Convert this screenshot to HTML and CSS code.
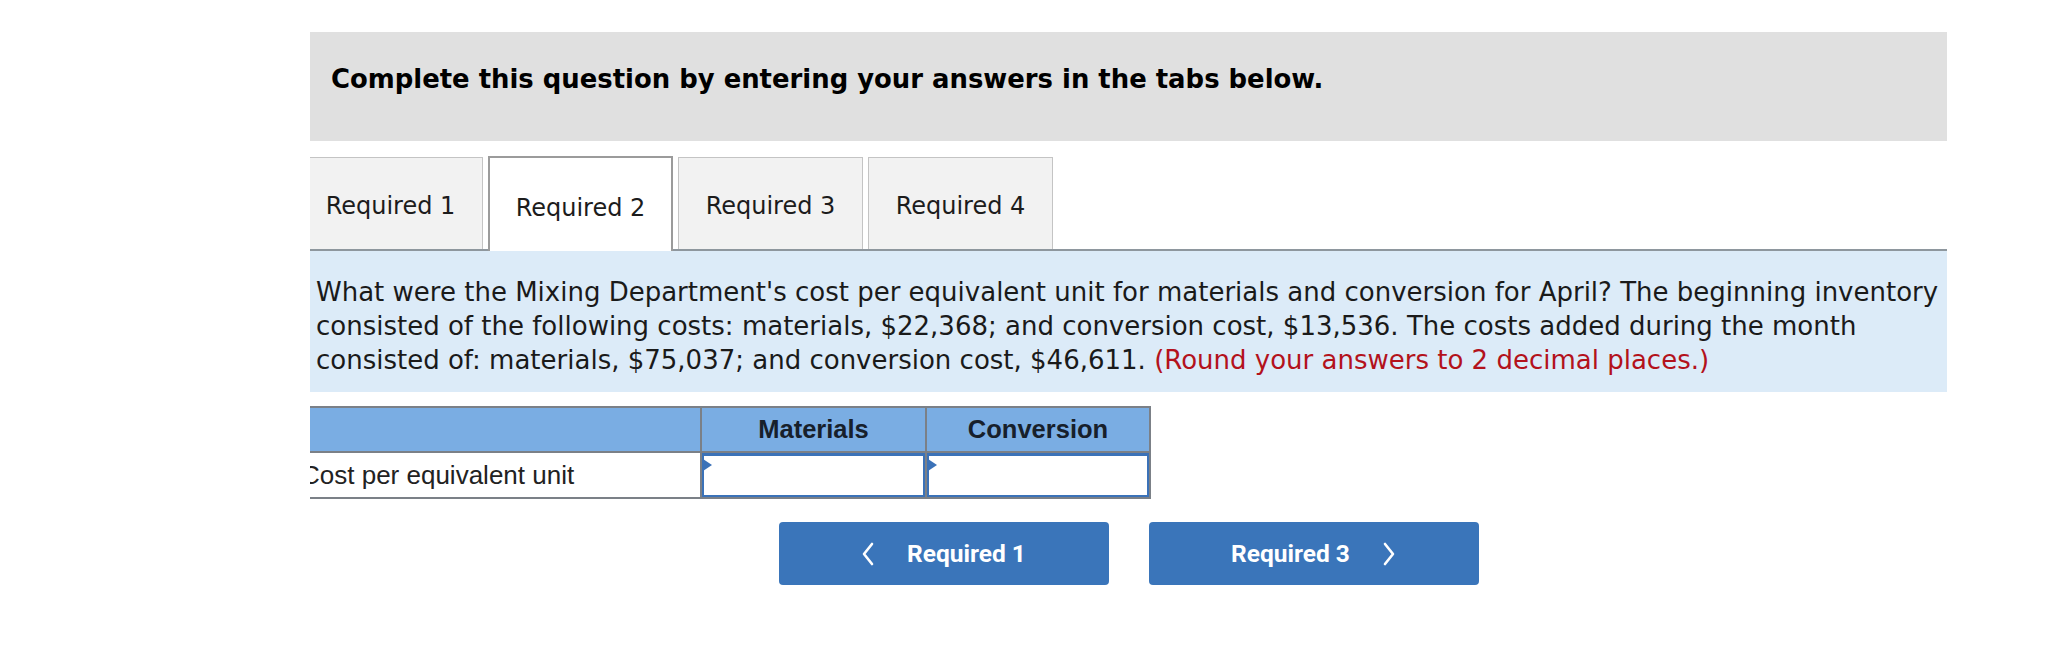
FILE: index.html
```html
<!DOCTYPE html>
<html lang="en">
<head>
<meta charset="utf-8">
<title>Complete this question</title>
<link rel="stylesheet" href="styles.css">
</head>
<body>
<div class="frame">
  <div class="banner">Complete this question by entering your answers in the tabs below.</div>

  <div class="tabs">
    <div class="tab">Required 1</div>
    <div class="tab active">Required 2</div>
    <div class="tab">Required 3</div>
    <div class="tab">Required 4</div>
  </div>

  <div class="question">What were the Mixing Department's cost per equivalent unit for materials and conversion for April? The beginning inventory consisted of the following costs: materials, $22,368; and conversion cost, $13,536. The costs added during the month consisted of: materials, $75,037; and conversion cost, $46,611. <span class="hint">(Round your answers to 2 decimal places.)</span></div>

  <div class="grid">
    <div class="hcell"></div>
    <div class="hcell col">Materials</div>
    <div class="hcell col">Conversion</div>
    <div class="cell label">Cost per equivalent unit</div>
    <div class="cell col"><div class="input"></div></div>
    <div class="cell col"><div class="input"></div></div>
  </div>

  <div class="nav">
    <button class="btn">
      <svg class="chev" width="14" height="24" viewBox="0 0 14 24"><polyline points="11,2 3,12 11,22" fill="none" stroke="#fff" stroke-width="2.6" stroke-linecap="round" stroke-linejoin="round"/></svg>
      <span>Required 1</span>
    </button>
    <button class="btn">
      <span>Required 3</span>
      <svg class="chev" width="14" height="24" viewBox="0 0 14 24"><polyline points="3,2 11,12 3,22" fill="none" stroke="#fff" stroke-width="2.6" stroke-linecap="round" stroke-linejoin="round"/></svg>
    </button>
  </div>
</div>
</body>
</html>
```

FILE: styles.css
```css
html, body {
  margin: 0;
  padding: 0;
  background: #ffffff;
}

.frame {
  margin: 32px 0 0 310px;
  width: 1637px;
  overflow: hidden;
  padding-bottom: 40px;
}

.banner {
  box-sizing: border-box;
  height: 109px;
  background: #e0e0e0;
  padding: 32px 0 0 21px;
  font-family: "DejaVu Sans", Verdana, sans-serif;
  font-weight: bold;
  font-size: 25.9px;
  line-height: 30px;
  color: #000;
}

.tabs {
  display: flex;
  align-items: flex-end;
  gap: 5px;
  margin-top: 16px;
  margin-left: -12px;
  border-bottom: 2px solid #8e979e;
  height: 92px;
}

.tab {
  box-sizing: border-box;
  width: 185px;
  height: 92px;
  padding-top: 34px;
  text-align: center;
  background: #f2f2f2;
  border: 1px solid #c4c4c4;
  border-bottom: none;
  font-family: "DejaVu Sans", Verdana, sans-serif;
  font-size: 24px;
  line-height: 28px;
  color: #1c1c1c;
}

.tab.active {
  height: 95px;
  margin-bottom: -2px;
  padding-top: 36px;
  background: #ffffff;
  border: 2px solid #9b9b9b;
  border-bottom: none;
}

.question {
  box-sizing: border-box;
  height: 141px;
  background: #dcebf8;
  padding: 24px 0 0 6px;
  font-family: "DejaVu Sans", Verdana, sans-serif;
  font-size: 26px;
  line-height: 34px;
  color: #1a1a1a;
}

.hint {
  color: #b3121c;
}

.grid {
  display: grid;
  grid-template-columns: 402px 225px 224px;
  width: max-content;
  margin: 14px 0 0 -12px;
  border-top: 2px solid #7b8087;
  border-right: 2px solid #7b8087;
}

.hcell {
  box-sizing: border-box;
  height: 45px;
  background: #7aade3;
  border-bottom: 2px solid #7b8087;
  font-family: "Liberation Sans", Arial, sans-serif;
  font-weight: bold;
  font-size: 25.5px;
  line-height: 43px;
  text-align: center;
  color: #17202b;
}

.col {
  border-left: 2px solid #7b8087;
}

.cell {
  box-sizing: border-box;
  height: 46px;
  border-bottom: 2px solid #7b8087;
}

.label {
  padding-left: 3px;
  font-family: "Liberation Sans", Arial, sans-serif;
  font-size: 26px;
  line-height: 44px;
  color: #222;
}

.input {
  position: relative;
  box-sizing: border-box;
  height: 44px;
  border: 2px solid #3b72b8;
  border-top-width: 3px;
  background: #fff;
}

.input::before {
  content: "";
  position: absolute;
  left: -1px;
  top: 3px;
  border-top: 6px solid transparent;
  border-bottom: 6px solid transparent;
  border-left: 9px solid #3b72b8;
}

.nav {
  display: flex;
  justify-content: center;
  gap: 40px;
  margin-top: 23px;
}

.btn {
  display: flex;
  align-items: center;
  justify-content: center;
  gap: 32px;
  width: 330px;
  height: 63px;
  padding: 0;
  border: none;
  border-radius: 4px;
  background: #3a75ba;
  color: #ffffff;
  font-family: Roboto, "Liberation Sans", sans-serif;
  font-weight: bold;
  font-size: 24.5px;
}

.chev {
  display: block;
}
```
